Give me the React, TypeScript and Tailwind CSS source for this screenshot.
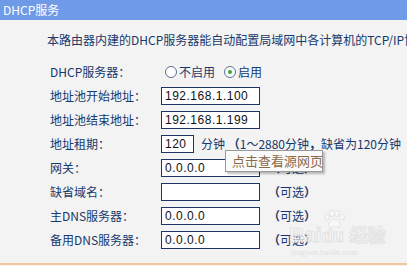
import React from "react";

const cjk = { fontFamily: '"Noto Sans CJK SC", "Noto Sans", sans-serif' };

function Row({ label, children }: { label: string; children: React.ReactNode }) {
  return (
    <div className="flex items-center h-[18px]">
      <div className="w-[111px] text-[12px] leading-[18px] text-[#17386c]">{label}</div>
      {children}
    </div>
  );
}

function Field({ value, w = "w-[99px]" }: { value: string; w?: string }) {
  return (
    <div
      className={`${w} h-[18px] bg-white border border-[#1b3461] pl-[3px] text-[12px] leading-[16px] text-[#111] tracking-[0.5px]`}
      style={{ fontFamily: '"Liberation Sans", Arial, sans-serif' }}
    >
      {value}
    </div>
  );
}

function Optional() {
  return (
    <span className="ml-[8px] text-[12px] text-[#17386c]">
      <span className="font-bold">（</span>可选<span className="font-bold">）</span>
    </span>
  );
}

function Radio({ checked, label }: { checked?: boolean; label: string }) {
  return (
    <div className="flex items-center gap-[2px]">
      <span className="w-[12px] h-[12px] rounded-full border border-[#5b6f8c] bg-white flex items-center justify-center">
        {checked && <span className="w-[4px] h-[4px] rounded-full bg-[#2fa83a]" />}
      </span>
      <span className="text-[12px] text-[#17386c]">{label}</span>
    </div>
  );
}

export default function App() {
  return (
    <div className="w-[407px] h-[266px] bg-[#f3f3f3] relative overflow-hidden" style={cjk}>
      {/* header bar */}
      <div className="h-[20px] bg-[#6f9ae8] text-white text-[12px] leading-[19px] pl-[3px]">DHCP服务</div>

      {/* intro */}
      <div className="mt-[12px] pl-[47px] h-[16px] text-[12px] leading-[16px] text-[#17386c] whitespace-nowrap overflow-hidden">
        本路由器内建的DHCP服务器能自动配置局域网中各计算机的TCP/IP协议。
      </div>

      <div className="mt-[15px] pl-[50px] flex flex-col gap-[6px]">
        <Row label="DHCP服务器：">
          <div className="ml-[4px] flex items-center gap-[9px]">
            <Radio label="不启用" />
            <Radio checked label="启用" />
          </div>
        </Row>
        <Row label="地址池开始地址：">
          <Field value="192.168.1.100" />
        </Row>
        <Row label="地址池结束地址：">
          <Field value="192.168.1.199" />
        </Row>
        <Row label="地址租期：">
          <Field value="120" w="w-[33px]" />
          <span className="ml-[7px] text-[12px] text-[#17386c] whitespace-nowrap">
            分钟 <span className="font-bold">（</span>1～2880分钟<span className="font-bold">，</span>缺省为120分钟
          </span>
        </Row>
        <Row label="网关：">
          <Field value="0.0.0.0" />
          <Optional />
        </Row>
        <Row label="缺省域名：">
          <Field value="" />
          <Optional />
        </Row>
        <Row label="主DNS服务器：">
          <Field value="0.0.0.0" />
          <Optional />
        </Row>
        <Row label="备用DNS服务器：">
          <Field value="0.0.0.0" />
          <Optional />
        </Row>
      </div>

      <div className="absolute left-0 right-0 top-[263px] h-[2px] bg-[#f3c598]" />

      {/* tooltip */}
      <div className="absolute left-[225px] top-[150px] w-[98px] h-[22px] bg-[#fafafa] border border-[#9a9a9a] shadow-[2px_2px_2px_rgba(0,0,0,0.25)] pl-[6px] text-[13px] leading-[20px] text-[#8a6a48] whitespace-nowrap">
        点击查看源网页
      </div>

      {/* watermark */}
      <div className="absolute left-[289px] top-[210px] pointer-events-none select-none opacity-80">
        <svg width="24" height="18" viewBox="0 0 24 18" className="absolute left-[33px] top-[0px]">
          <g fill="#f8f8f8" stroke="#e0e0e0" strokeWidth="1">
            <ellipse cx="5" cy="7" rx="2.5" ry="3" />
            <ellipse cx="10" cy="3.5" rx="2.5" ry="3" />
            <ellipse cx="15" cy="3.5" rx="2.5" ry="3" />
            <ellipse cx="20" cy="7" rx="2.5" ry="3" />
            <path d="M12.5 9c-3 0-6 4-6 6.5 0 2 3 2 6 1 3 1 6 1 6-1 0-2.5-3-6.5-6-6.5z" />
          </g>
        </svg>
        <div
          className="mt-[13px] text-[21px] leading-[22px] font-bold text-[#f7f7f7] whitespace-nowrap"
          style={{ fontFamily: '"Liberation Sans", Arial, sans-serif', WebkitTextStroke: "1px #dedede" }}
        >
          Bai<span className="text-[18px]">du</span> <span style={cjk} className="text-[18px]">经验</span>
        </div>
        <div className="text-[9px] leading-[10px] text-[#dcdcdc] pl-[2px] whitespace-nowrap" style={{ fontFamily: '"Liberation Serif", serif' }}>
          jingyan.baidu.com
        </div>
      </div>
    </div>
  );
}
